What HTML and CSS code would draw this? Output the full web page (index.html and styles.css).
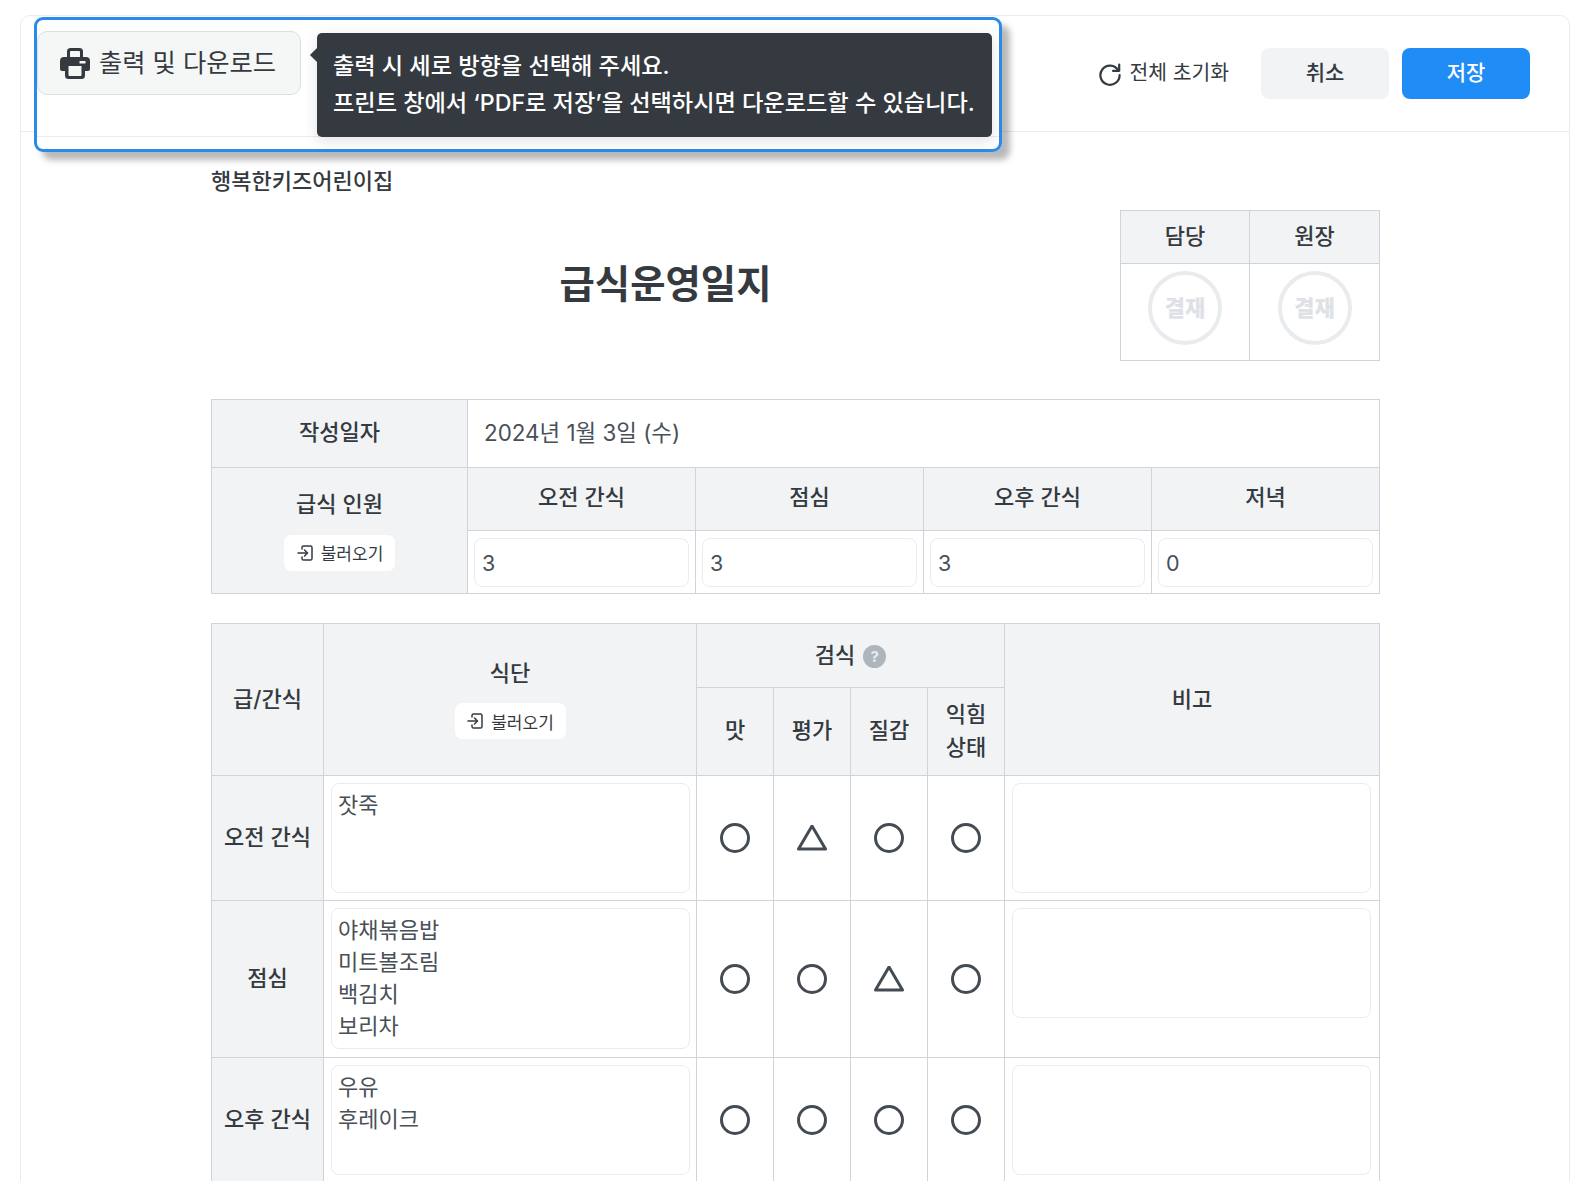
FILE: index.html
```html
<!DOCTYPE html>
<html lang="ko">
<head>
    <meta charset="UTF-8">
    <meta name="viewport" content="width=device-width, initial-scale=1.0">
    <title>급식운영일지</title>
    <link rel="stylesheet" href="styles.css">
</head>
<body>
    <div class="page">
        <div class="card">
            <!-- 상단 버튼 영역 -->
            <header class="card-header">
                <button class="reset-btn">
                    <svg class="reset-icon" viewBox="0 0 24 24"><path d="M20.2 8.2A9.6 9.6 0 1 0 21.6 13"/><path d="M21.2 2.6v6.2H15"/></svg>
                    <span class="reset-label">전체 초기화</span>
                </button>
                <button class="btn btn-cancel">취소</button>
                <button class="btn btn-save">저장</button>
            </header>

            <div class="card-body">
                <p class="org-name">행복한키즈어린이집</p>

                <div class="title-row">
                    <h1 class="doc-title">급식운영일지</h1>
                    <table class="approval">
                        <colgroup><col class="col-approver"><col></colgroup>
                        <tr><th>담당</th><th>원장</th></tr>
                        <tr>
                            <td><span class="stamp">결재</span></td>
                            <td><span class="stamp">결재</span></td>
                        </tr>
                    </table>
                </div>

                <!-- 작성일자 / 급식 인원 -->
                <table class="sheet info-table">
                    <colgroup><col class="col-label"><col class="col-meal"><col class="col-meal"><col class="col-meal"><col></colgroup>
                    <tr class="row-date">
                        <th>작성일자</th>
                        <td colspan="4" class="date-cell">2024년 1월 3일 (수)</td>
                    </tr>
                    <tr class="row-meal-head">
                        <th rowspan="2" class="th-load">
                            <div class="th-stack">
                                급식 인원
                                <button class="load-btn">
                                    <svg class="load-icon" viewBox="0 0 18 18"><path d="M6 5V3.6A1.6 1.6 0 0 1 7.6 2h6.8A1.6 1.6 0 0 1 16 3.6v10.8a1.6 1.6 0 0 1-1.6 1.6H7.6A1.6 1.6 0 0 1 6 14.4V13"/><path d="M2 9h9"/><path d="M8.5 6l3 3-3 3"/></svg>
                                    불러오기
                                </button>
                            </div>
                        </th>
                        <th>오전 간식</th>
                        <th>점심</th>
                        <th>오후 간식</th>
                        <th>저녁</th>
                    </tr>
                    <tr class="row-meal-input">
                        <td><input class="field" value="3"></td>
                        <td><input class="field" value="3"></td>
                        <td><input class="field" value="3"></td>
                        <td><input class="field" value="0"></td>
                    </tr>
                </table>

                <!-- 식단 / 검식 -->
                <table class="sheet menu-table">
                    <colgroup>
                        <col class="col-type"><col class="col-menu">
                        <col class="col-check"><col class="col-check"><col class="col-check"><col class="col-check">
                        <col>
                    </colgroup>
                    <tr class="row-head-top">
                        <th rowspan="2">급/간식</th>
                        <th rowspan="2" class="th-load">
                            <div class="th-stack">
                                식단
                                <button class="load-btn">
                                    <svg class="load-icon" viewBox="0 0 18 18"><path d="M6 5V3.6A1.6 1.6 0 0 1 7.6 2h6.8A1.6 1.6 0 0 1 16 3.6v10.8a1.6 1.6 0 0 1-1.6 1.6H7.6A1.6 1.6 0 0 1 6 14.4V13"/><path d="M2 9h9"/><path d="M8.5 6l3 3-3 3"/></svg>
                                    불러오기
                                </button>
                            </div>
                        </th>
                        <th colspan="4" class="th-check">검식 <span class="help">?</span></th>
                        <th rowspan="2">비고</th>
                    </tr>
                    <tr class="row-head-sub">
                        <th>맛</th>
                        <th>평가</th>
                        <th>질감</th>
                        <th>익힘<br>상태</th>
                    </tr>
                    <tr class="row-snack">
                        <th>오전 간식</th>
                        <td><div class="memo">잣죽</div></td>
                        <td class="mark"><span class="circle"></span></td>
                        <td class="mark"><svg class="triangle" viewBox="0 0 30 27"><path d="M15 1 28.500 24H1.500z"/></svg></td>
                        <td class="mark"><span class="circle"></span></td>
                        <td class="mark"><span class="circle"></span></td>
                        <td class="note-cell"><div class="memo memo-note"></div></td>
                    </tr>
                    <tr class="row-lunch">
                        <th>점심</th>
                        <td><div class="memo">야채볶음밥<br>미트볼조림<br>백김치<br>보리차</div></td>
                        <td class="mark"><span class="circle"></span></td>
                        <td class="mark"><span class="circle"></span></td>
                        <td class="mark"><svg class="triangle" viewBox="0 0 30 27"><path d="M15 1 28.500 24H1.500z"/></svg></td>
                        <td class="mark"><span class="circle"></span></td>
                        <td class="note-cell"><div class="memo memo-note"></div></td>
                    </tr>
                    <tr class="row-snack">
                        <th>오후 간식</th>
                        <td><div class="memo">우유<br>후레이크</div></td>
                        <td class="mark"><span class="circle"></span></td>
                        <td class="mark"><span class="circle"></span></td>
                        <td class="mark"><span class="circle"></span></td>
                        <td class="mark"><span class="circle"></span></td>
                        <td class="note-cell"><div class="memo memo-note"></div></td>
                    </tr>
                </table>
            </div>
        </div>

        <!-- 안내 오버레이 -->
        <div class="tour-box">
            <button class="print-btn">
                <svg class="print-icon" viewBox="0 0 30 32"><path d="M7 10V4.500A3.500 3.500 0 0 1 10.500 1h9A3.500 3.500 0 0 1 23 4.500V10h-3V5a1 1 0 0 0-1-1H11a1 1 0 0 0-1 1v5z"/><path fill-rule="evenodd" d="M4 10h22a4 4 0 0 1 4 4v8a2 2 0 0 1-2 2h-3v4.500a3.500 3.500 0 0 1-3.500 3.500H8.500A3.500 3.500 0 0 1 5 28.500V24H2a2 2 0 0 1-2-2v-8a4 4 0 0 1 4-4zM8.500 19h13v9a1 1 0 0 1-1 1h-11a1 1 0 0 1-1-1zM19.500 14h6v2.500h-6z"/></svg>
                <span class="print-label">출력 및 다운로드</span>
            </button>
            <div class="tour-tip">
                출력 시 세로 방향을 선택해 주세요.<br>
                프린트 창에서 ‘PDF로 저장’을 선택하시면 다운로드할 수 있습니다.
            </div>
        </div>
    </div>
</body>
</html>
```

FILE: styles.css
```css
* {
    margin: 0;
    padding: 0;
    box-sizing: border-box;
}

html, body {
    width: 100%;
    height: 100%;
    overflow: hidden;
    background: #ffffff;
    color: #343a40;
    font-family: Inter, 'Noto Sans CJK KR', sans-serif;
}

button, input {
    font-family: inherit;
}

.page {
    position: relative;
    height: 100%;
    overflow: hidden;
    padding: 15px 12px 0 20px;
}

.card {
    height: 1300px;
    border: 1px solid #e9ecef;
    border-radius: 10px;
}

/* 헤더 */
.card-header {
    height: 116px;
    padding: 32px 39px 0 0;
    display: flex;
    justify-content: flex-end;
    align-items: flex-start;
    gap: 13px;
    border-bottom: 1px solid #e9ecef;
}

.reset-btn {
    height: 51px;
    margin-right: 19px;
    display: flex;
    align-items: center;
    gap: 7px;
    border: none;
    background: none;
    color: #343a40;
    font-size: 20.400px;
    font-weight: 400;
}

.reset-label {
    padding-bottom: 5px;
}

.reset-icon {
    width: 24px;
    height: 24px;
    fill: none;
    stroke: #343a40;
    stroke-width: 2.2;
    stroke-linecap: round;
    stroke-linejoin: round;
}

.btn {
    width: 128px;
    height: 51px;
    padding-bottom: 5px;
    border: none;
    border-radius: 8px;
    font-size: 21px;
    font-weight: 500;
}

.btn-cancel {
    background: #f1f3f5;
    color: #343a40;
}

.btn-save {
    background: #208cf5;
    color: #ffffff;
}

/* 본문 */
.card-body {
    padding: 33px 189px 0 190px;
}

.org-name {
    font-size: 22px;
    line-height: 32px;
    font-weight: 500;
}

.title-row {
    height: 189px;
    margin-top: 13px;
    display: flex;
    justify-content: flex-end;
    align-items: flex-start;
}

.doc-title {
    flex: 1;
    padding-top: 46px;
    text-align: center;
    font-size: 38.400px;
    line-height: 56px;
    font-weight: 700;
}

.approval {
    width: 260px;
    height: 151px;
    table-layout: fixed;
    border-collapse: collapse;
}

.col-approver {
    width: 129px;
}

.approval th,
.approval td {
    border: 1px solid #ced4da;
    text-align: center;
}

.approval th {
    height: 53px;
    padding-bottom: 7px;
    background: #f1f3f5;
    font-size: 22px;
    font-weight: 500;
}

.approval td {
    padding: 0 0 9px 0;
}

.stamp {
    width: 74px;
    height: 74px;
    margin: 0 auto;
    padding-bottom: 3px;
    display: flex;
    align-items: center;
    justify-content: center;
    border: 4px solid #e9ecef;
    border-radius: 50%;
    color: #dee2e6;
    font-size: 22px;
    font-weight: 900;
}

/* 공통 표 */
.sheet {
    width: 100%;
    table-layout: fixed;
    border-collapse: collapse;
}

.sheet th,
.sheet td {
    border: 1px solid #ced4da;
    text-align: center;
    font-size: 22px;
}

.sheet th {
    padding-bottom: 6px;
    background: #f1f3f5;
    font-weight: 500;
}

.info-table th {
    padding-bottom: 8px;
}

.sheet .th-load {
    padding-bottom: 4px;
}

.th-stack {
    margin-top: 2px;
    display: flex;
    flex-direction: column;
    align-items: center;
    gap: 14px;
    line-height: 32px;
}

.menu-table .th-stack {
    gap: 13px;
}

.load-btn {
    width: 113px;
    height: 38px;
    display: flex;
    align-items: center;
    justify-content: center;
    gap: 7px;
    border: 1px solid #f1f3f5;
    border-radius: 8px;
    background: #ffffff;
    color: #343a40;
    font-size: 17px;
    font-weight: 400;
}

.load-icon {
    width: 18px;
    height: 18px;
    fill: none;
    stroke: #343a40;
    stroke-width: 1.5;
    stroke-linecap: round;
    stroke-linejoin: round;
}

/* 급식 인원 표 */
.info-table {
    margin-bottom: 29px;
}

.col-label {
    width: 256px;
}

.col-meal {
    width: 228px;
}

.row-date {
    height: 68px;
}

.date-cell.date-cell {
    padding: 0 0 5px 16px;
    text-align: left;
    font-size: 22.400px;
    font-weight: 400;
    color: #495057;
}

.row-meal-head {
    height: 63px;
}

.row-meal-input {
    height: 63px;
}

.row-meal-input td {
    padding: 0 6px;
}

.field {
    width: 100%;
    height: 49px;
    padding: 2px 7px 0;
    border: 1px solid #e9ecef;
    border-radius: 8px;
    color: #495057;
    font-size: 21.500px;
    display: block;
}

/* 식단 표 */
.col-type {
    width: 112px;
}

.col-menu {
    width: 373px;
}

.col-check {
    width: 77px;
}

.row-head-top {
    height: 64px;
}

.row-head-sub {
    height: 88px;
    line-height: 33px;
}

.sheet .row-head-sub th {
    padding-bottom: 2px;
}

.help {
    width: 23px;
    height: 23px;
    margin-left: 2px;
    display: inline-flex;
    align-items: center;
    justify-content: center;
    vertical-align: 1px;
    border-radius: 50%;
    background: #adb5bd;
    color: #e9ecef;
    font-size: 15px;
    font-weight: 700;
}

.row-snack {
    height: 125px;
}

.row-lunch {
    height: 157px;
}

.sheet td:has(.memo) {
    padding: 7px 6px 7px 7px;
    vertical-align: top;
}

.sheet .note-cell.note-cell {
    padding-right: 8px;
}

.memo {
    min-height: 110px;
    padding: 5px 6px 6px;
    border: 1px solid #e9ecef;
    border-radius: 8px;
    color: #495057;
    text-align: left;
    font-size: 22px;
    line-height: 32px;
}

.mark svg,
.circle {
    display: block;
    margin: 0 auto;
}

.circle {
    width: 30px;
    height: 30px;
    border: 3px solid #454b52;
    border-radius: 50%;
}

.triangle {
    width: 30px;
    height: 27px;
    fill: none;
    stroke: #454b52;
    stroke-width: 3;
    stroke-linejoin: round;
}

/* 안내 오버레이 */
.tour-box {
    position: absolute;
    left: 34px;
    top: 17px;
    width: 968px;
    height: 135px;
    border: 3px solid #2b8be8;
    border-radius: 9px;
    background: linear-gradient(#ffffff 0, #ffffff 116px, #e9ecef 116px, #e9ecef 117px, #ffffff 117px);
    box-shadow: 8px 8px 6px rgba(0, 0, 0, 0.28);
}

.print-btn {
    position: absolute;
    left: 0;
    top: 11px;
    width: 264px;
    height: 64px;
    display: flex;
    align-items: center;
    justify-content: center;
    gap: 9px;
    padding-right: 2px;
    border: 1.500px solid #dcdfe2;
    border-radius: 10px;
    background: #f5f6f6;
    color: #343a40;
    font-size: 25.300px;
    font-weight: 400;
}

.print-label {
    padding-bottom: 5px;
}

.print-icon {
    width: 30px;
    height: 32px;
    fill: #343a40;
}

.tour-tip {
    position: absolute;
    left: 280px;
    top: 13px;
    width: 675px;
    height: 104px;
    padding: 15px 0 0 16px;
    border-radius: 5px;
    background: #343a40;
    color: #ffffff;
    font-size: 23.200px;
    font-weight: 500;
    line-height: 36.500px;
    box-shadow: 0 4px 14px rgba(0, 0, 0, 0.12);
    white-space: nowrap;
}

.tour-tip::before {
    content: '';
    position: absolute;
    left: -5px;
    top: 17px;
    width: 10px;
    height: 10px;
    background: #343a40;
    transform: rotate(45deg);
}
```
